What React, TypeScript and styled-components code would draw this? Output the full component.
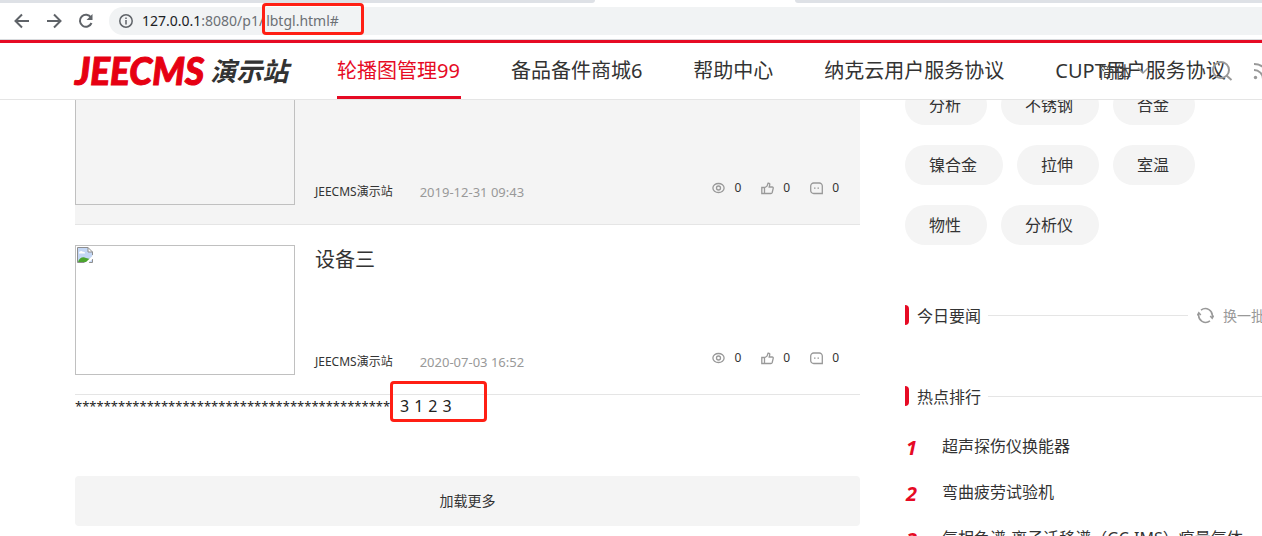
import React from "react";
import styled, { createGlobalStyle, css } from "styled-components";

const Global = createGlobalStyle`
  * { box-sizing: border-box; }
  html, body { margin: 0; height: 100%; overflow: hidden; background: #fff; }
  body { font-family: "Noto Sans", "Noto Sans CJK SC", sans-serif; font-size: 16px; color: #333; }
  a { color: inherit; text-decoration: none; }
  button { font: inherit; color: inherit; border: 0; background: none; padding: 0; cursor: pointer; }
  h2, h3, p, ol, ul { margin: 0; padding: 0; font-weight: 400; list-style: none; }
  svg { display: block; flex: none; }
`;

const TabStrip = styled.div`
  display: flex;
  height: 3px;
  background: #fff;
`;
const TabEdge = styled.span<{ $side: "left" | "right" }>`
  background: #dee1e6;
  ${(p) =>
    p.$side === "left"
      ? css`flex: 0 0 595px; border-bottom-right-radius: 3px;`
      : css`flex: 1; margin-left: 200px; border-bottom-left-radius: 3px;`}
`;
const Toolbar = styled.div`
  display: flex;
  align-items: center;
  height: 37px;
  padding-left: 13px;
  border-bottom: 1px solid #d8dadd;
  background: #fff;
`;
const ToolButton = styled.button`
  display: grid;
  place-items: center;
  width: 18px;
  height: 18px;
  margin-right: 14px;
  color: #5f6368;
`;
const Address = styled.div`
  display: flex;
  align-items: center;
  flex: 1;
  height: 28px;
  padding-left: 10px;
  gap: 9px;
  border-radius: 14px 0 0 14px;
  background: #f1f3f4;
  color: #5f6368;
`;
const Url = styled.span`
  font-size: 14px;
  line-height: 20px;
  color: #6c7075;
  b { font-weight: 400; color: #202124; }
`;
const UrlTail = styled.span`
  position: relative;
  margin-left: 2px;
`;
const Mark = styled.span<{ $w: number; $h: number; $x: number; $y: number }>`
  position: absolute;
  z-index: 20;
  left: ${(p) => p.$x}px;
  top: ${(p) => p.$y}px;
  width: ${(p) => p.$w}px;
  height: ${(p) => p.$h}px;
  border: 3px solid #ff1f14;
  border-radius: 4px;
  pointer-events: none;
`;

const Header = styled.header`
  position: relative;
  z-index: 10;
  display: flex;
  height: 60px;
  padding-left: 75px;
  border-top: 3px solid #e60a24;
  border-bottom: 1px solid #e5e5e5;
  background: #fff;
  white-space: nowrap;
`;
const Logo = styled.a`
  display: flex;
  align-items: center;
  flex: 0 0 262px;
  gap: 6px;
  font-style: italic;
`;
const LogoLatin = styled.span`
  font: italic 900 37px/48px Lato, sans-serif;
  color: #e60012;
  -webkit-text-stroke: 1px #e60012;
`;
const LogoHan = styled.span`
  font-size: 26px;
  font-weight: 700;
  line-height: 48px;
`;
const Nav = styled.nav`
  display: flex;
  gap: 50px;
`;
const NavLink = styled.a<{ $active?: boolean }>`
  height: 56px;
  padding-right: 1px;
  font-size: 20px;
  line-height: 56px;
  box-shadow: ${(p) => (p.$active ? "inset 0 -3px #e60a24" : "none")};
  color: ${(p) => (p.$active ? "#e60a24" : "#333")};
`;
const HeaderTools = styled.div`
  position: absolute;
  left: 1099px;
  top: 0;
  display: flex;
  align-items: center;
  height: 56px;
  color: #999;
`;
const Language = styled.button`
  display: flex;
  align-items: center;
  gap: 6px;
  width: 112px;
  color: #444;
  svg { color: #999; }
`;
const IconButton = styled.button`
  display: block;
  margin-right: 20px;
  color: #999;
`;

const Content = styled.div`
  display: grid;
  grid-template-columns: 785fr 370fr;
  gap: 45px;
  min-width: 1200px;
  margin: -45px 0 0 75px;
  width: calc(100% - 75px);
`;
const Card = styled.article<{ $hover?: boolean }>`
  display: flex;
  gap: 20px;
  height: 170px;
  padding: 20px 21px 19px 0;
  border-bottom: 1px solid #e5e5e5;
  background: ${(p) => (p.$hover ? "#f4f4f4" : "#fff")};
`;
const Thumb = styled.div`
  flex: 0 0 220px;
  height: 130px;
  padding: 1px;
  border: 1px solid #c0c0c0;
`;
const CardBody = styled.div`
  display: flex;
  flex: 1;
  flex-direction: column;
  justify-content: space-between;
`;
const CardTitle = styled.h2`
  font-size: 20px;
  line-height: 30px;
`;
const Meta = styled.div`
  display: flex;
  align-items: center;
  height: 26px;
  font-size: 12px;
  line-height: 20px;
`;
const Time = styled.time`
  margin-left: 27px;
  font-size: 13px;
  line-height: 18px;
  color: #999;
`;
const Stats = styled.ul`
  display: flex;
  gap: 20px;
  margin: 0 0 8px auto;
`;
const Stat = styled.li`
  display: flex;
  align-items: center;
  gap: 9px;
  svg { color: #999; }
`;
const Pages = styled.p`
  position: relative;
  display: flex;
  gap: 6px;
  height: 81px;
  font-size: 16px;
  line-height: 22px;
  color: #222;
`;
const Stars = styled.span`
  flex: 0 0 319px;
  font-size: 13px;
`;
const PageLinks = styled.span`
  display: flex;
  gap: 5px;
`;
const More = styled.button`
  width: 100%;
  height: 50px;
  padding-bottom: 2px;
  border-radius: 4px;
  background: #f4f4f4;
  font-size: 14px;
`;

const Side = styled.aside`padding-top: 30px;`;
const Tags = styled.div`
  display: flex;
  flex-wrap: wrap;
  gap: 20px 14px;
  width: 300px;
  margin-bottom: 60px;
`;
const Tag = styled.a`
  height: 40px;
  padding: 0 26px 0 24px;
  border-radius: 20px;
  background: #f4f4f4;
  line-height: 41px;
`;
const SectionHead = styled.div<{ $space: number }>`
  display: flex;
  align-items: center;
  height: 20px;
  margin-bottom: ${(p) => p.$space}px;
  &::before {
    content: "";
    width: 4px;
    height: 20px;
    margin-right: 8px;
    border-radius: 0 4px 4px 0;
    background: #e60a24;
  }
`;
const SectionTitle = styled.h3`
  font-size: 16px;
  line-height: 22px;
  padding-top: 2px;
`;
const Rule = styled.span`
  flex: 1;
  height: 1px;
  margin-left: 7px;
  background: #e5e5e5;
`;
const Refresh = styled.button`
  display: flex;
  align-items: center;
  gap: 9px;
  margin-left: 9px;
  padding-right: 10px;
  font-size: 14px;
  color: #999;
`;
const Rank = styled.li`
  display: flex;
  height: 46px;
  line-height: 46px;
  white-space: nowrap;
`;
const RankNo = styled.span`
  flex: 0 0 37px;
  padding-left: 1px;
  font: italic 700 20px/50px "Noto Sans", sans-serif;
  color: #e60a24;
`;

const Line = ({ size, w = 2, children }: { size: number; w?: number; children: React.ReactNode }) => (
  <svg width={size} height={size} viewBox={`0 0 ${size} ${size}`} fill="none" stroke="currentColor" strokeWidth={w} aria-hidden="true">
    {children}
  </svg>
);
const Eye = () => (
  <Line size={13} w={1.3}>
    <ellipse cx="6.5" cy="6" rx="5.6" ry="4.5" />
    <circle cx="6.5" cy="6" r="2" />
  </Line>
);
const Thumbs = () => (
  <Line size={13} w={1.3}>
    <path d="M.8 5.5h2.700v6H.8zM3.500 5.800 6 4.200 7 1.200c1.300-.3 2 .6 1.700 1.700L8.200 5h3c.8 0 1.200.5 1 1.300l-1 4.200c-.2.7-.6 1-1.300 1H3.500" />
  </Line>
);
const Comment = () => (
  <Line size={13} w={1.3}>
    <path d="M3.700 1h5.600a3 3 0 0 1 3 3v7.500H3.700a3 3 0 0 1-3-3V4a3 3 0 0 1 3-3z" />
    <path d="M4 6.200h1.500M7.500 6.200H9" />
  </Line>
);
const BrokenImage = () => (
  <svg width="16" height="16" viewBox="0 0 16 16" role="img" aria-label="设备三">
    <path d="M.5.5H11L15.500 5v10.500H.5z" fill="#c4d7f5" />
    <path d="M2 6c0-2 3-3 4-1 1.500-.5 2 .5 2 1.500H2z" fill="#fff" />
    <path d="M1 15c1-4 5-6 8-4l4 1v3z" fill="#4ba52e" />
    <path d="M11 .5V5h4.500z" fill="#fff" />
    <path d="M15.500 8V5L11 .5H.5v15h7M11 .5V5h4.500M12 15.500h3.500V12" fill="none" stroke="#8e8e8e" />
    <path d="m8 16 8-7.500v3L11.500 16z" fill="#fff" />
  </svg>
);

const cards = [
  { title: "设备二", time: "2019-12-31 09:43", hover: true },
  { title: "设备三", time: "2020-07-03 16:52", hover: false },
];
const tags = ["分析", "不锈钢", "合金", "镍合金", "拉伸", "室温", "物性", "分析仪"];
const ranks = ["超声探伤仪换能器", "弯曲疲劳试验机", "气相色谱-离子迁移谱（GC-IMS）痕量气体"];
const navItems = ["轮播图管理99", "备品备件商城6", "帮助中心", "纳克云用户服务协议", "CUPT用户服务协议"];

export default function App() {
  return (
    <>
      <Global />
      <TabStrip>
        <TabEdge $side="left" />
        <TabEdge $side="right" />
      </TabStrip>
      <Toolbar>
        <ToolButton aria-label="后退">
          <Line size={18}><path d="M16 9H3M9 2.500 2.500 9 9 15.500" /></Line>
        </ToolButton>
        <ToolButton aria-label="前进">
          <Line size={18}><path d="M2 9h13M9 2.500 15.500 9 9 15.500" /></Line>
        </ToolButton>
        <ToolButton aria-label="刷新">
          <Line size={18}>
            <path d="M14 5.500A6 6 0 1 0 14.500 11" />
            <path d="M15.500 2v6h-6z" fill="currentColor" stroke="none" />
          </Line>
        </ToolButton>
        <Address>
          <Line size={14} w={1.5}>
            <circle cx="7" cy="7" r="6.200" />
            <path d="M7 6v4.500M7 3.500V5" />
          </Line>
          <Url>
            <b>127.0.0.1</b>:8080/p1/
            <UrlTail>
              lbtgl.html#
              <Mark $x={-4} $y={-8} $w={102} $h={32} />
            </UrlTail>
          </Url>
        </Address>
      </Toolbar>

      <Header>
        <Logo href="#">
          <LogoLatin>JEECMS</LogoLatin>
          <LogoHan>演示站</LogoHan>
        </Logo>
        <Nav>
          {navItems.map((item, i) => (
            <NavLink key={item} href="#" $active={i === 0}>{item}</NavLink>
          ))}
        </Nav>
        <HeaderTools>
          <Language>
            简体
            <Line size={12} w={1.5}><path d="m1 3 5 5 5-5" /></Line>
          </Language>
          <IconButton aria-label="搜索">
            <Line size={22}><circle cx="10" cy="10" r="8" /><path d="m15.500 15.500 5 4.500" /></Line>
          </IconButton>
          <IconButton aria-label="订阅">
            <Line size={20}>
              <path d="M1 9a9 9 0 0 1 9 9M1 3a15 15 0 0 1 15 15" />
              <circle cx="2.500" cy="16.500" r="1.700" fill="currentColor" stroke="none" />
            </Line>
          </IconButton>
        </HeaderTools>
      </Header>

      <Content>
        <main>
          {cards.map((c) => (
            <Card key={c.time} $hover={c.hover}>
              <Thumb><BrokenImage /></Thumb>
              <CardBody>
                <CardTitle>{c.title}</CardTitle>
                <Meta>
                  <span>JEECMS演示站</span>
                  <Time>{c.time}</Time>
                  <Stats>
                    <Stat><Eye />0</Stat>
                    <Stat><Thumbs />0</Stat>
                    <Stat><Comment />0</Stat>
                  </Stats>
                </Meta>
              </CardBody>
            </Card>
          ))}
          <Pages>
            <Stars>{"*".repeat(44)}</Stars>
            <PageLinks>
              <span>3</span>
              <a href="#">1</a>
              <a href="#">2</a>
              <a href="#">3</a>
            </PageLinks>
            <Mark $x={315} $y={-14} $w={97} $h={41} />
          </Pages>
          <More>加载更多</More>
        </main>
        <Side>
          <Tags>
            {tags.map((t) => <Tag key={t} href="#">{t}</Tag>)}
          </Tags>
          <SectionHead $space={61}>
            <SectionTitle>今日要闻</SectionTitle>
            <Rule />
            <Refresh>
              <Line size={17} w={1.5}>
                <path d="M4 3.200a7 7 0 0 1 11.200 6.800M13 13.800A7 7 0 0 1 1.800 7" />
                <path d="m13.200 9 2 2.200 1.500-2.700M3.800 8l-2-2.200L.3 8.500" />
              </Line>
              换一批
            </Refresh>
          </SectionHead>
          <SectionHead $space={17}>
            <SectionTitle>热点排行</SectionTitle>
            <Rule />
          </SectionHead>
          <ol>
            {ranks.map((r, i) => (
              <Rank key={r}>
                <RankNo>{i + 1}</RankNo>
                <a href="#">{r}</a>
              </Rank>
            ))}
          </ol>
        </Side>
      </Content>
    </>
  );
}
